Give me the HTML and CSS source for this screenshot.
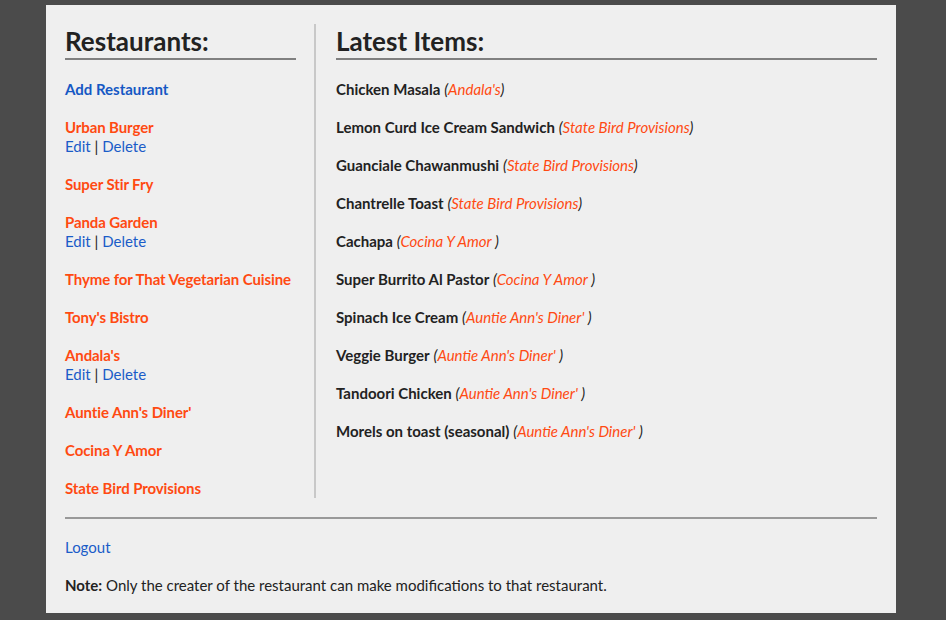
FILE: index.html
```html
<!DOCTYPE html>
<html lang="en">
<head>
<meta charset="utf-8">
<title>Restaurants</title>
<link rel="stylesheet" href="styles.css">
</head>
<body>
<div class="page">
  <div class="columns">
    <div class="col-left">
      <h2 class="heading">Restaurants:</h2>
      <p class="item"><a class="add" href="#">Add Restaurant</a></p>
      <p class="item"><a class="rest" href="#">Urban Burger</a><br><a class="act" href="#">Edit</a> | <a class="act" href="#">Delete</a></p>
      <p class="item"><a class="rest" href="#">Super Stir Fry</a></p>
      <p class="item"><a class="rest" href="#">Panda Garden</a><br><a class="act" href="#">Edit</a> | <a class="act" href="#">Delete</a></p>
      <p class="item"><a class="rest" href="#">Thyme for That Vegetarian Cuisine</a></p>
      <p class="item"><a class="rest" href="#">Tony's Bistro</a></p>
      <p class="item"><a class="rest" href="#">Andala's</a><br><a class="act" href="#">Edit</a> | <a class="act" href="#">Delete</a></p>
      <p class="item"><a class="rest" href="#">Auntie Ann's Diner'</a></p>
      <p class="item"><a class="rest" href="#">Cocina Y Amor</a></p>
      <p class="item"><a class="rest" href="#">State Bird Provisions</a></p>
    </div>
    <div class="col-right">
      <h2 class="heading">Latest Items:</h2>
      <p class="item"><b>Chicken Masala</b> <i>(<span class="src">Andala's</span>)</i></p>
      <p class="item"><b>Lemon Curd Ice Cream Sandwich</b> <i>(<span class="src">State Bird Provisions</span>)</i></p>
      <p class="item"><b>Guanciale Chawanmushi</b> <i>(<span class="src">State Bird Provisions</span>)</i></p>
      <p class="item"><b>Chantrelle Toast</b> <i>(<span class="src">State Bird Provisions</span>)</i></p>
      <p class="item"><b>Cachapa</b> <i>(<span class="src">Cocina Y Amor </span>)</i></p>
      <p class="item"><b>Super Burrito Al Pastor</b> <i>(<span class="src">Cocina Y Amor </span>)</i></p>
      <p class="item"><b>Spinach Ice Cream</b> <i>(<span class="src">Auntie Ann's Diner' </span>)</i></p>
      <p class="item"><b>Veggie Burger</b> <i>(<span class="src">Auntie Ann's Diner' </span>)</i></p>
      <p class="item"><b>Tandoori Chicken</b> <i>(<span class="src">Auntie Ann's Diner' </span>)</i></p>
      <p class="item"><b>Morels on toast (seasonal)</b> <i>(<span class="src">Auntie Ann's Diner' </span>)</i></p>
    </div>
  </div>
  <div class="footer">
    <p class="item"><a class="logout" href="#">Logout</a></p>
    <p class="item note"><b>Note:</b> Only the creater of the restaurant can make modifications to that restaurant.</p>
  </div>
</div>
</body>
</html>
```
FILE: styles.css
```css
html, body {
  margin: 0;
  padding: 0;
  background: #4b4b4b;
}
body {
  font-family: Lato, "Open Sans", sans-serif;
  font-size: 15px;
  line-height: 19px;
  color: #222;
}
.page {
  width: 812px;
  margin: 5px 0 0 46px;
  padding: 19px;
  background: #efefef;
  height: 570px;
  box-sizing: content-box;
}
.columns {
  display: grid;
  grid-template-columns: 251px 1fr;
  padding-bottom: 19px;
  border-bottom: 2px solid #999;
}
.col-left {
  padding-right: 18px;
  border-right: 2px solid #c8c8c8;
}
.col-right {
  padding-left: 20px;
}
.heading {
  margin: 0 0 20px 0;
  font-size: 26px;
  line-height: 34px;
  font-weight: 700;
  color: #222;
  border-bottom: 2px solid #808080;
}
.item {
  margin: 0 0 19px 0;
}
.col-left .item:last-child,
.col-right .item:last-child,
.footer .item:last-child {
  margin-bottom: 0;
}
a {
  text-decoration: none;
}
.add {
  color: #1558c4;
  font-weight: 700;
}
.rest {
  color: #ff4a12;
  font-weight: 700;
  white-space: nowrap;
  letter-spacing: -0.1px;
}
.act, .logout {
  color: #1a5cc8;
}
.src {
  color: #ff4a12;
}
.footer {
  padding-top: 19px;
}
```
